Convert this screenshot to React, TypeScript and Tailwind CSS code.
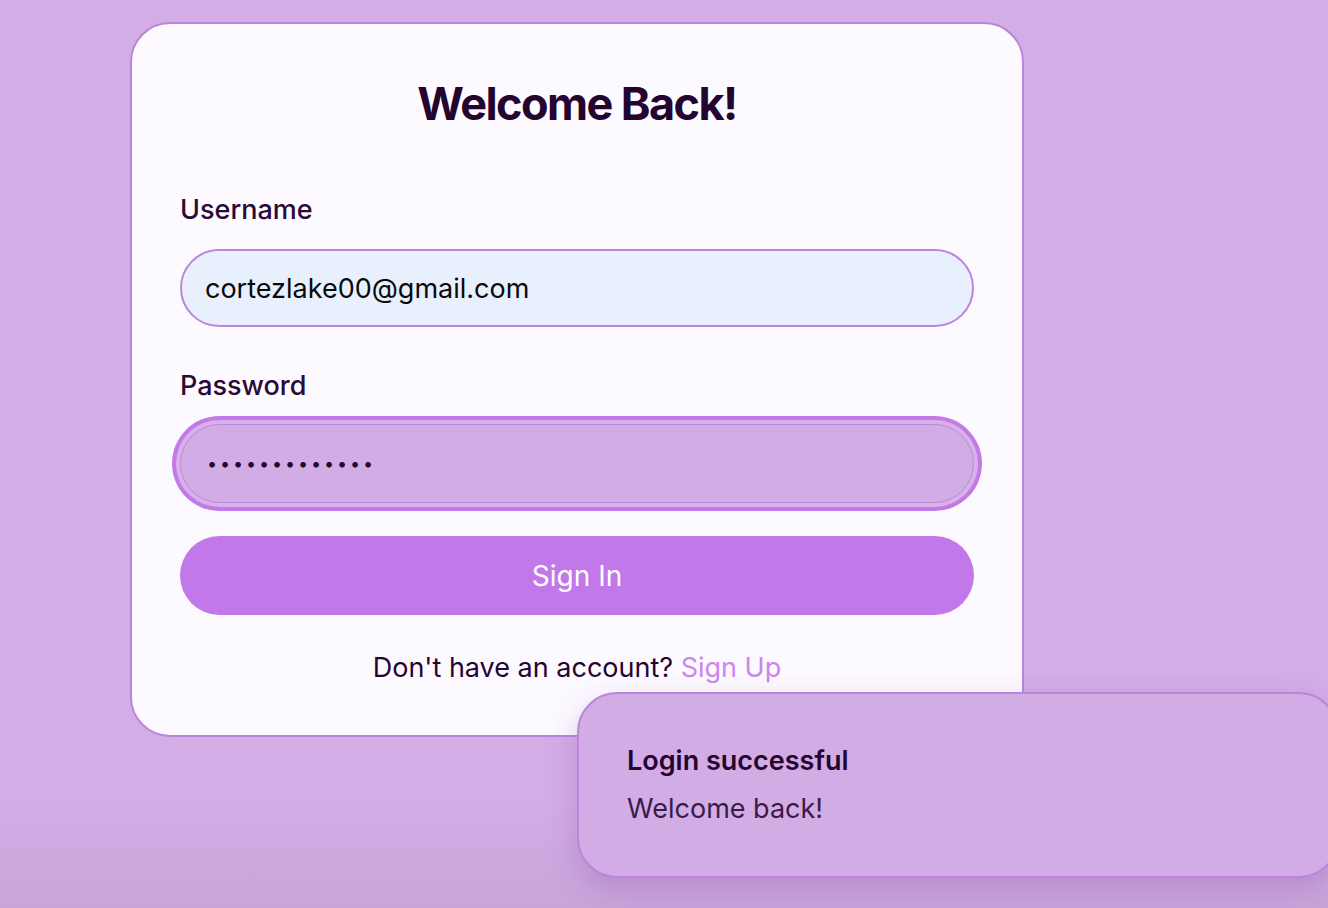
import { useState } from 'react';

const LoginPage = () => {
  const [username, setUsername] = useState('cortezlake00@gmail.com');
  const [password, setPassword] = useState('secretpass123');

  return (
    <div className="relative min-h-[908px] w-full overflow-hidden bg-[linear-gradient(to_bottom,#d3ade6_88%,#c9a5da)] font-['Inter',sans-serif] pl-[130px] pt-[22px]">
      <div className="w-[894px] rounded-[40px] border-2 border-[#bb86da] bg-[#fcf9ff] px-[48px] pt-[50px] pb-[51px]">
        <h1 className="text-center text-[45px] font-bold leading-[60px] tracking-[-0.035em] text-[#24052f]">
          Welcome Back!
        </h1>

        <form className="mt-[60px] flex flex-col" onSubmit={(e) => e.preventDefault()}>
          <label className="text-[27px] font-medium leading-[32px] text-[#2a0a36]">Username</label>
          <input
            value={username}
            onChange={(e) => setUsername(e.target.value)}
            className="mt-[23px] h-[78px] w-full rounded-full border-2 border-[#bb86da] bg-[#e8f0fe] px-[23px] text-[27px] text-[#0a0a0a] outline-none"
          />

          <label className="mt-[43px] text-[27px] font-medium leading-[32px] text-[#2a0a36]">Password</label>
          <input
            type="password"
            value={password}
            onChange={(e) => setPassword(e.target.value)}
            className="mt-[22px] h-[79px] w-full rounded-full border-[1.5px] border-[#bb88d8] bg-[#d2ace5] px-[26px] text-[18px] tracking-[0.16em] text-[#24052f] outline-none ring-4 ring-[#c37ae8] ring-offset-4 ring-offset-[#d6b2e8]"
          />

          <button
            type="submit"
            className="mt-[33px] h-[79px] w-full rounded-full bg-[#c278e8] text-[28px] text-white"
          >
            Sign In
          </button>
        </form>

        <p className="mt-[37px] text-center text-[27px] leading-[32px] text-[#24052f]">
          Don't have an account? <a href="#" className="text-[#cc86ec]">Sign Up</a>
        </p>
      </div>

      {/* toast */}
      <div className="absolute left-[577px] top-[692px] h-[186px] w-[762px] rounded-[40px] border-2 border-[#bb86da] bg-[#d2ace5] px-[48px] pt-[49px] shadow-[0_12px_30px_rgba(120,60,150,0.25)]">
        <div className="text-[27px] font-semibold leading-[36px] text-[#24052f]">Login successful</div>
        <div className="mt-[12px] text-[27px] leading-[36px] text-[#3a1a48]">Welcome back!</div>
      </div>
    </div>
  );
};

export default function App() {
  return <LoginPage />;
}
